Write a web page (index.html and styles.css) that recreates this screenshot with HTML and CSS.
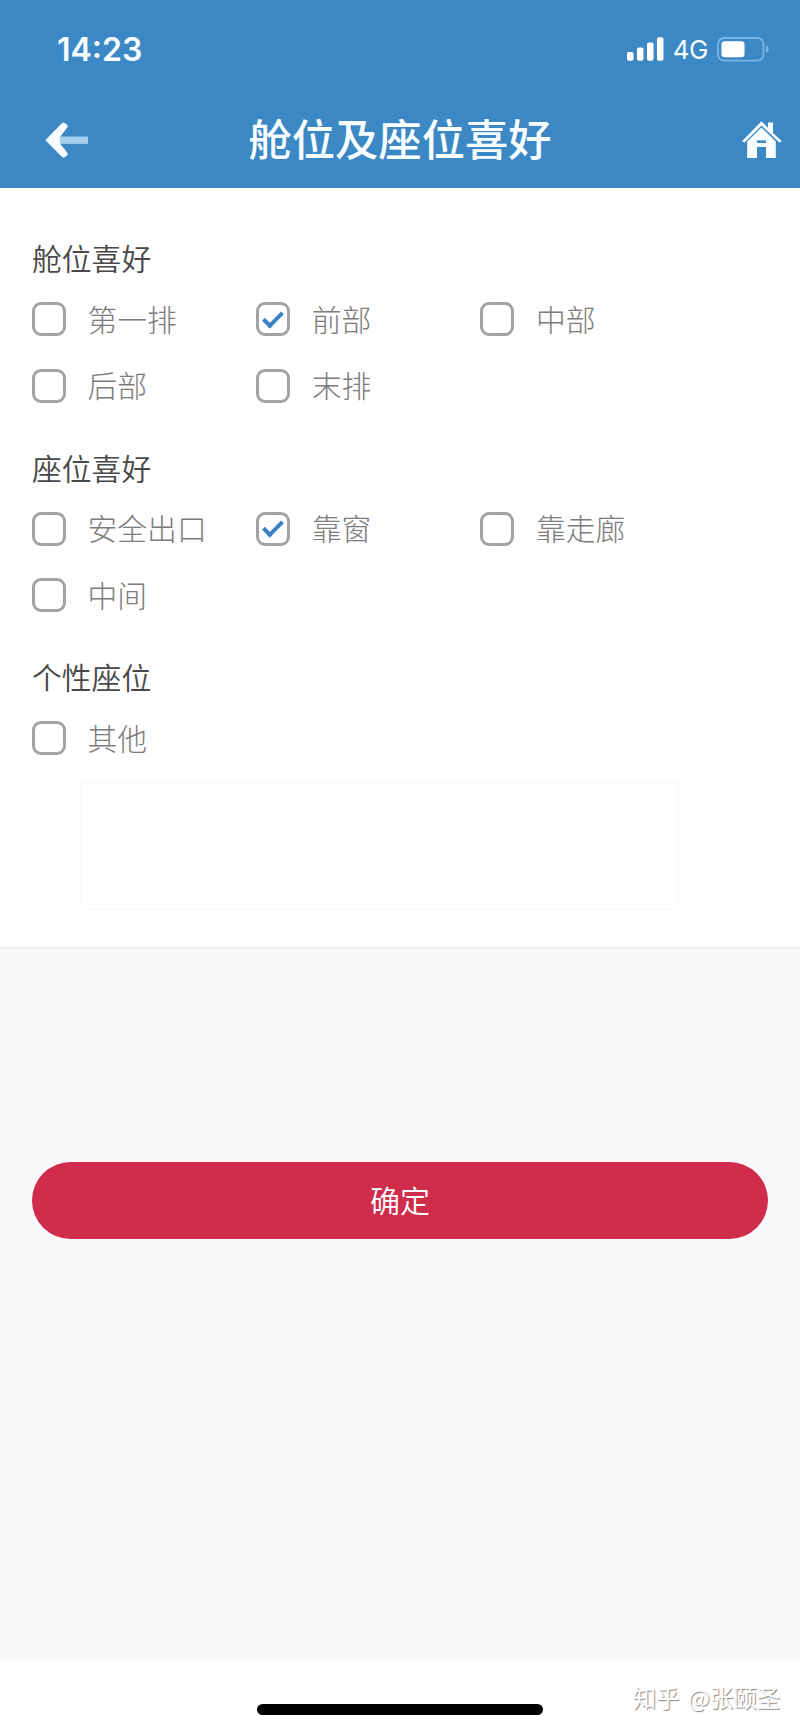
FILE: index.html
```
<!DOCTYPE html>
<html lang="zh-CN">
<head>
  <meta charset="utf-8" />
  <title>舱位及座位喜好</title>
  <meta name="viewport" content="width=device-width, initial-scale=1.0" />
  <link rel="stylesheet" href="styles.css">
</head>
<body>
<header class="header">
  <div class="status">
    <span class="time">14:23</span>
    <svg class="signal" width="37" height="24" viewBox="0 0 37 24" fill="#fff">
      <rect x="0" y="15" width="6.5" height="8.7" rx="1.8" />
      <rect x="10" y="10.5" width="6.5" height="13.2" rx="1.8" />
      <rect x="20" y="5.5" width="6.5" height="18.2" rx="1.8" />
      <rect x="30" y="0.3" width="6.5" height="23.4" rx="1.8" />
    </svg>
    <span class="network">4G</span>
    <svg class="battery" width="53" height="25" viewBox="0 0 53 25">
      <rect x="1" y="1" width="45.5" height="22.6" rx="6" fill="none" stroke="#79b5e6" stroke-width="1.8" />
      <rect x="4.5" y="4.3" width="23" height="16" rx="3.2" fill="#fff" />
      <path d="M49 8.3c3.6 1.4 3.6 6.6 0 8z" fill="#79b5e6" />
    </svg>
  </div>
  <div class="navbar">
    <a class="back" href="#">
      <svg width="44" height="36" viewBox="0 0 44 36">
        <path d="M14 14.5h29v7.4H14z" fill="#a5d0ee" />
        <path d="M0.3 18.2L17.3 0.8Q18.5 0 19.8 0.9L22.3 3.1Q23.2 4.3 22.3 5.5L14.8 15.2V21L22.3 30.8Q23.2 32 22.2 33.2L19.8 35.2Q18.5 36 17.3 35.2Z" fill="#f5fbff" />
      </svg>
    </a>
    <h1 class="title">舱位及座位喜好</h1>
    <a class="home" href="#">
      <svg width="40" height="38" viewBox="0 0 40 38" fill="#f8fdff">
        <path d="M0 20.2L19.5 0.2L26 6.8V1.6H31V12L40 20.2L37.3 21.6L19.5 4.4L2.6 21.6Z" />
        <path d="M5.2 20.6L19.5 6.4L33.8 20.6V37H24V26H15V37H5.2Z" />
        <path d="M15 19.4h9v2.6h-9z" fill="#3b88c4" />
      </svg>
    </a>
  </div>
</header>

<form class="sheet">
  <section class="group">
    <h2>舱位喜好</h2>
    <div class="options">
      <label class="option"><input type="checkbox" /><span>第一排</span></label>
      <label class="option"><input type="checkbox" checked /><span>前部</span></label>
      <label class="option"><input type="checkbox" /><span>中部</span></label>
      <label class="option"><input type="checkbox" /><span>后部</span></label>
      <label class="option"><input type="checkbox" /><span>末排</span></label>
    </div>
  </section>
  <section class="group">
    <h2>座位喜好</h2>
    <div class="options">
      <label class="option"><input type="checkbox" /><span>安全出口</span></label>
      <label class="option"><input type="checkbox" checked /><span>靠窗</span></label>
      <label class="option"><input type="checkbox" /><span>靠走廊</span></label>
      <label class="option"><input type="checkbox" /><span>中间</span></label>
    </div>
  </section>
  <section class="group">
    <h2>个性座位</h2>
    <div class="options">
      <label class="option"><input type="checkbox" /><span>其他</span></label>
    </div>
    <textarea class="other"></textarea>
  </section>
</form>

<main class="actions">
  <button class="submit" type="button">确定</button>
</main>

<footer class="footer">
  <div class="indicator"></div>
  <span class="watermark">知乎 @张颐圣</span>
</footer>
</body>
</html>
```
FILE: styles.css
```
* {
  box-sizing: border-box;
}
body {
  margin: 0;
  width: 800px;
  height: 1732px;
  display: flex;
  flex-direction: column;
  background: #fefefe;
  font-family: "Noto Sans CJK SC", sans-serif;
}
.header {
  height: 188px;
  background: #3b88c4;
  color: #f8fdff;
}
.status {
  display: flex;
  align-items: center;
  height: 98px;
  padding: 0 30px 0 57px;
  font-family: Inter, sans-serif;
}
.time {
  margin-right: auto;
  font-size: 32px;
  font-weight: 600;
}
.network {
  margin: 0 9px 0 9px;
  font-size: 26px;
  letter-spacing: -0.5px;
}
.navbar {
  display: grid;
  grid-template-columns: 100px 1fr 100px;
  align-items: center;
  height: 84px;
}
.back,
.home {
  display: flex;
}
.back {
  padding-left: 45px;
}
.home {
  justify-content: flex-end;
  padding-right: 18px;
}
.title {
  margin: 0;
  padding-bottom: 6px;
  font-size: 43.3px;
  font-weight: 500;
  line-height: 78px;
  text-align: center;
}

.sheet {
  height: 761px;
  padding: 43px 0 0 32px;
  border-bottom: 2px solid #ededed;
}
.group {
  margin-bottom: 21.5px;
}
.group h2 {
  margin: 0;
  height: 55px;
  font-size: 29.8px;
  font-weight: 350;
  line-height: 52px;
  color: #484848;
}
.options {
  display: grid;
  grid-template-columns: repeat(3, 224.2px);
  grid-auto-rows: 66.5px;
}
.option {
  display: flex;
  align-items: center;
  gap: 21.5px;
  font-size: 29.8px;
  font-weight: 300;
  color: #7c7c7c;
}
.option span {
  padding-bottom: 3.5px;
}
.option input {
  appearance: none;
  display: grid;
  place-items: center;
  width: 34px;
  height: 34px;
  margin: 0;
  border: 3px solid #a3a3a3;
  border-radius: 9px;
  background: #fff;
}
/* tick: two sides of a rotated box */
.option input:checked::after {
  content: "";
  box-sizing: border-box;
  width: 20px;
  height: 11px;
  margin-bottom: 4px;
  border: solid #3b82c4;
  border-width: 0 0 4.5px 4.5px;
  transform: rotate(-45deg);
}
.other {
  display: block;
  width: 599px;
  height: 129px;
  margin: 9px 0 0 48px;
  border: 2px solid #fafafa;
  background: #fefefe;
  resize: none;
}

.actions {
  height: 711px;
  padding: 213px 32px 0;
  background: #f9f9f9;
}
.submit {
  display: block;
  width: 100%;
  height: 77px;
  padding: 0 0 3px;
  border: 0;
  border-radius: 39px;
  background: #d02c4b;
  color: #fff;
  font-family: inherit;
  font-size: 30px;
  font-weight: 350;
}

.footer {
  position: relative;
  height: 72px;
  padding-top: 44px;
}
.indicator {
  width: 286px;
  height: 11px;
  margin: 0 auto;
  border-radius: 6px;
  background: #000;
}
.watermark {
  position: absolute;
  right: 20px;
  top: 20px;
  font-size: 23.4px;
  line-height: 34px;
  word-spacing: 3px;
  color: #fff;
  text-shadow: 1px 1px 1px #888;
}
```
